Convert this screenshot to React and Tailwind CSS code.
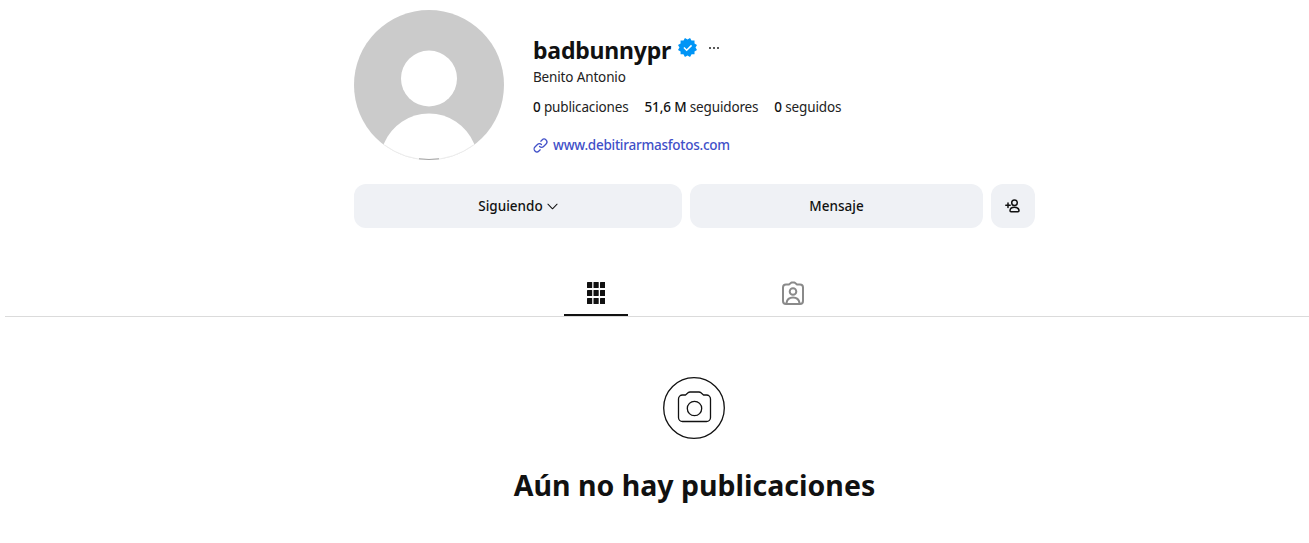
function Avatar() {
  return (
    <svg viewBox="0 0 150 150" className="w-[150px] h-[150px] shrink-0">
      <defs>
        <clipPath id="avatar-clip">
          <circle cx="75" cy="75" r="75" />
        </clipPath>
      </defs>
      <circle cx="75" cy="75" r="75" fill="#cbcbcb" />
      <g clipPath="url(#avatar-clip)">
        <circle cx="75" cy="68.500" r="28" fill="#fff" />
        <path d="M30 133.500 A48.750 48.750 0 0 1 120 133.500 L120 150 L30 150 Z" fill="#fff" />
      </g>
      <path d="M30.500 135 A74.500 74.500 0 0 0 119.500 135" fill="none" stroke="#ececec" strokeWidth="1" />
      <path d="M65 148.800 A74.500 74.500 0 0 0 85 148.800" fill="none" stroke="#a3a3a3" strokeWidth="1" />
    </svg>
  );
}

function VerifiedBadge() {
  return (
    <svg viewBox="0 0 40 40" className="w-[19px] h-[19px]">
      <path
        fill="#0095f6"
        fillRule="evenodd"
        d="M19.998 3.094 14.638 0l-2.972 5.15H5.432v6.354L0 14.64 3.094 20 0 25.359l5.432 3.137v5.905h5.975L14.638 40l5.36-3.094L25.358 40l3.232-5.6h6.162v-6.01L40 25.359 36.905 20 40 14.641l-5.248-3.03v-6.46h-6.419L25.358 0l-5.36 3.094Zm7.415 11.225 2.254 2.287-11.43 11.5-6.835-6.93 2.244-2.258 4.587 4.581 9.18-9.18Z"
      />
    </svg>
  );
}

function LinkIcon() {
  return (
    <svg viewBox="0 0 24 24" className="w-[15px] h-[15px] mr-[5px]" fill="none" stroke="#4150c8" strokeWidth="2" strokeLinecap="round">
      <path d="M10.500 13.500a4.500 4.500 0 0 0 6.400 0l4-4a4.500 4.500 0 0 0-6.400-6.400l-2 2" />
      <path d="M13.500 10.500a4.500 4.500 0 0 0-6.400 0l-4 4a4.500 4.500 0 0 0 6.400 6.400l2-2" />
    </svg>
  );
}

function Chevron() {
  return (
    <svg viewBox="0 0 12 12" className="w-[11px] h-[11px] ml-[4px]" fill="none" stroke="#111" strokeWidth="1.100" strokeLinecap="round" strokeLinejoin="round">
      <path d="M1 3.500 6 8.500 11 3.500" />
    </svg>
  );
}

function AddPerson() {
  return (
    <svg viewBox="0 0 16 16" className="w-[16px] h-[16px]" fill="none" stroke="#111" strokeWidth="1.500" strokeLinecap="round">
      <circle cx="9.500" cy="4.800" r="2.800" />
      <path d="M5 12.800c0-2.400 2-3.500 4.500-3.500s4.500 1.100 4.500 3.500c0 .6-.4 1-1 1H6c-.6 0-1-.4-1-1Z" />
      <path d="M.8 7.300h4.400M3 5.100v4.400" />
    </svg>
  );
}

function GridIcon() {
  const xs = [0, 6.500, 13];
  const ys = [0, 8, 16];
  return (
    <svg viewBox="0 0 18 22" className="w-[18px] h-[22px]" fill="#111">
      {ys.map((y) =>
        xs.map((x) => <rect key={`${x}-${y}`} x={x} y={y} width="5.200" height="6" rx="0.500" />)
      )}
    </svg>
  );
}

function TaggedIcon() {
  return (
    <svg viewBox="0 0 24 24" className="w-[24px] h-[24px]" fill="none" stroke="#8a8a8a" strokeWidth="2" strokeLinejoin="round" strokeLinecap="round">
      <path d="M8 3.500 10.500 1.500h3L16 3.500h3a3 3 0 0 1 3 3V20a3 3 0 0 1-3 3H5a3 3 0 0 1-3-3V6.500a3 3 0 0 1 3-3Z" />
      <circle cx="12" cy="10.500" r="3.300" />
      <path d="M5.500 22c.6-3.800 3.300-5.500 6.500-5.500s5.900 1.700 6.500 5.500" />
    </svg>
  );
}

function CameraCircle() {
  return (
    <svg viewBox="0 0 62 62" className="w-[62px] h-[62px] mr-[1px]" fill="none" stroke="#111" strokeWidth="1.300">
      <circle cx="31" cy="31" r="30.300" />
      <path strokeLinejoin="round" d="M22.500 18 25 15.800c.6-.5 1.300-.8 2-.8h9c.7 0 1.400.3 2 .8L40.500 18h3c2.200 0 4 1.800 4 4v18.500c0 2.200-1.800 4-4 4h-24c-2.200 0-4-1.800-4-4V22c0-2.200 1.800-4 4-4Z" />
      <circle cx="31.500" cy="31.500" r="7.200" />
    </svg>
  );
}

function Stat({ value, label }) {
  return (
    <span>
      <span className="font-medium text-[#111]">{value}</span> {label}
    </span>
  );
}

export default function App() {
  return (
    <div className="min-h-[543px] bg-white text-[#111] pl-[5px] overflow-hidden font-['Noto_Sans','Open_Sans',sans-serif]">
      <div className="ml-[349px] w-[681px] pt-[10px]">
        <div className="flex">
          <Avatar />
          <div className="ml-[29px] pt-[24px]">
            <div className="flex items-center h-[30px]">
              <h1 className="text-[23px] font-bold leading-[30px] tracking-[-0.2px] pt-[1px]">badbunnypr</h1>
              <span className="ml-[7px] -mt-[3px] flex"><VerifiedBadge /></span>
              <span className="ml-[12px] -mt-[2px] flex gap-[2px]">
                <i className="w-[2px] h-[2px] bg-[#222] rounded-full" />
                <i className="w-[2px] h-[2px] bg-[#222] rounded-full" />
                <i className="w-[2px] h-[2px] bg-[#222] rounded-full" />
              </span>
            </div>
            <div className="text-[13.5px] leading-[18px] tracking-[-0.15px] mt-[4px] text-[#222]">Benito Antonio</div>
            <div className="flex gap-[16px] text-[13.5px] leading-[18px] tracking-[-0.15px] mt-[12px] text-[#222]">
              <Stat value="0" label="publicaciones" />
              <Stat value="51,6 M" label="seguidores" />
              <Stat value="0" label="seguidos" />
            </div>
            <div className="flex items-center mt-[20px] h-[18px] text-[13.5px] tracking-[-0.25px] font-medium text-[#4150c8]">
              <LinkIcon />
              www.debitirarmasfotos.com
            </div>
          </div>
        </div>

        <div className="flex gap-[8px] mt-[24px] text-[13.5px] font-medium text-[#111]">
          <button className="w-[328px] h-[44px] rounded-[12px] bg-[#eff1f5] flex items-center justify-center">
            Siguiendo
            <Chevron />
          </button>
          <button className="w-[293px] h-[44px] rounded-[12px] bg-[#eff1f5] flex items-center justify-center">Mensaje</button>
          <button className="w-[44px] h-[44px] rounded-[12px] bg-[#eff1f5] flex items-center justify-center">
            <AddPerson />
          </button>
        </div>
      </div>

      <div className="mt-[44px] h-[45px] border-b border-[#dbdbdb]">
        <div className="ml-[349px] w-[681px] h-[44px] flex justify-center">
          <div className="w-[197px] h-[44px] flex justify-center">
            <div className="w-[64px] h-[44px] flex justify-center pt-[10px] border-b-2 border-[#111]">
              <GridIcon />
            </div>
          </div>
          <div className="w-[197px] h-[44px] flex justify-center pt-[9px]">
            <TaggedIcon />
          </div>
        </div>
      </div>

      <div className="ml-[349px] w-[681px] flex flex-col items-center pt-[60px]">
        <CameraCircle />
        <h2 className="mt-[26px] text-[28.5px] leading-[40px] font-bold text-[#111]">Aún no hay publicaciones</h2>
      </div>
    </div>
  );
}
